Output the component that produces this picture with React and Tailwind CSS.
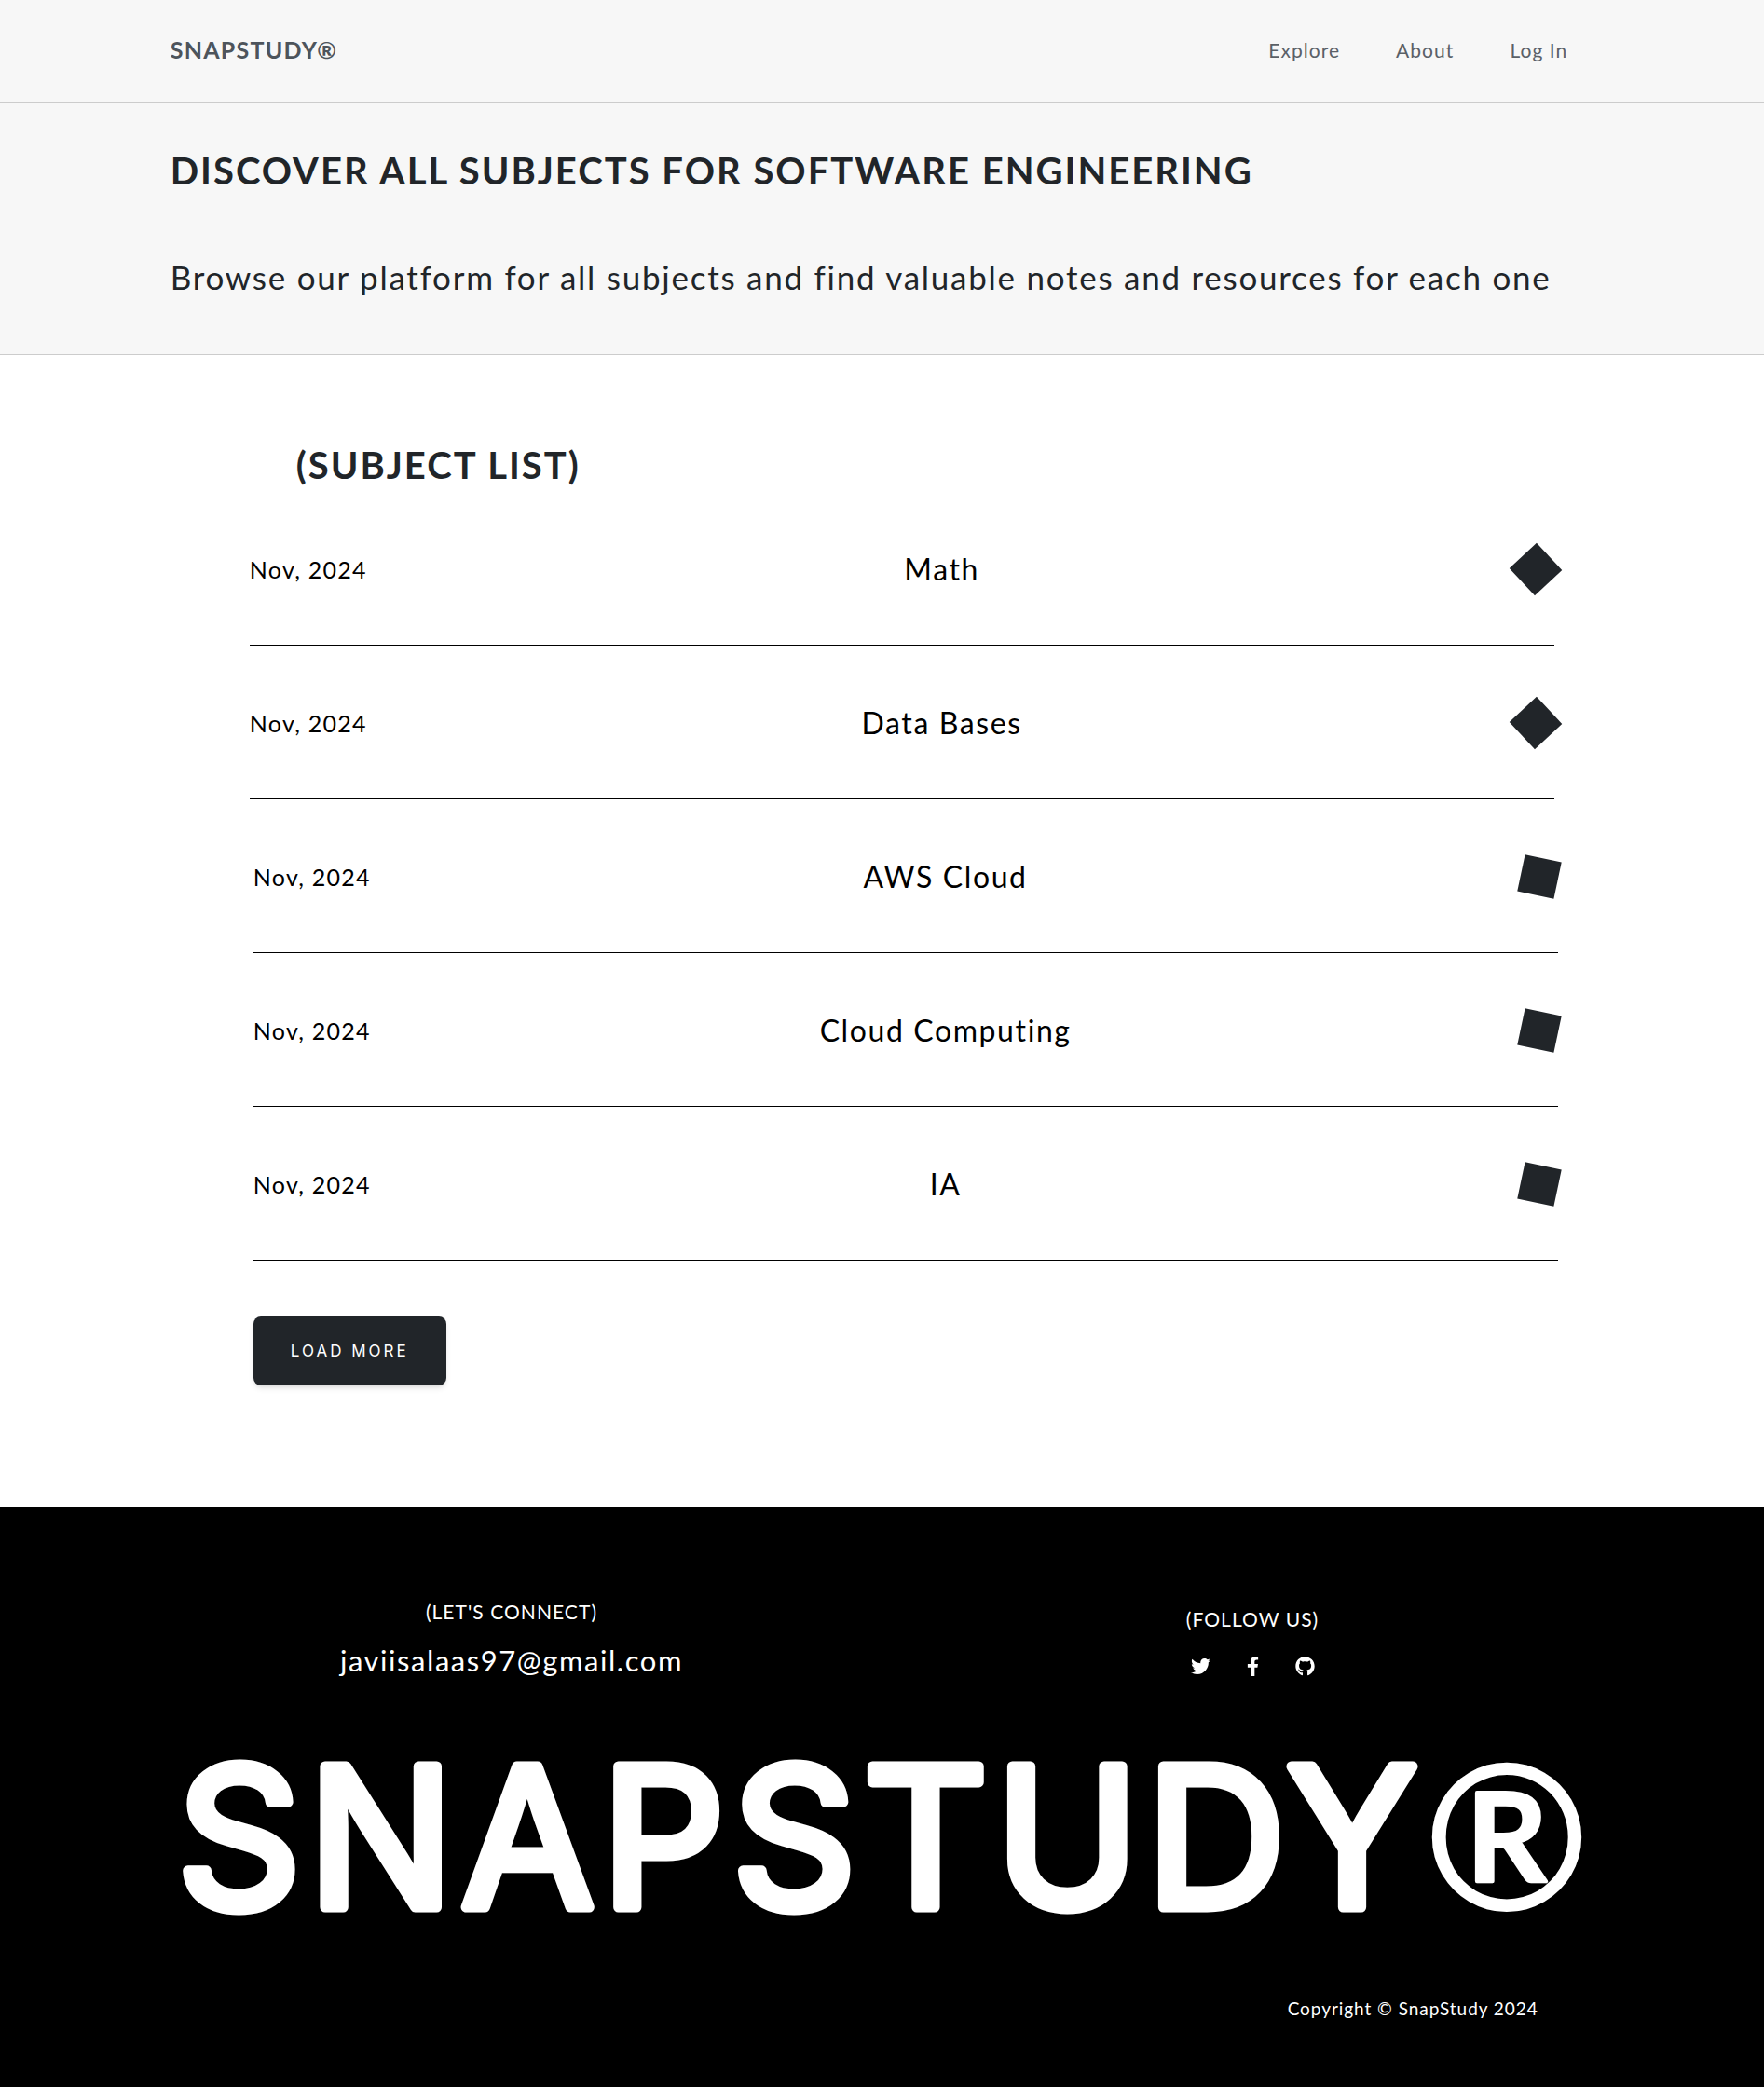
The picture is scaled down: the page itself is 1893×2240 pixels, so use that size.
import { FaTwitter, FaFacebookF, FaGithub } from "react-icons/fa";

const subjects = [
  { date: "Nov, 2024", title: "Math", row: "pr-1", mark: "rotate-47" },
  { date: "Nov, 2024", title: "Data Bases", row: "pr-1", mark: "rotate-47" },
  { date: "Nov, 2024", title: "AWS Cloud", row: "pl-1", mark: "rotate-12" },
  { date: "Nov, 2024", title: "Cloud Computing", row: "pl-1", mark: "rotate-12" },
  { date: "Nov, 2024", title: "IA", row: "pl-1", mark: "rotate-12" },
];

const social = [
  { label: "Twitter", Icon: FaTwitter },
  { label: "Facebook", Icon: FaFacebookF },
  { label: "GitHub", Icon: FaGithub },
];

function Header() {
  return (
    <header className="border-b border-[#cccccc] bg-[#f7f7f7] px-[9.65%]">
      <div className="flex h-[110px] items-center justify-between pr-7 pb-1">
        <a href="#home" className="text-[25px] leading-8 font-bold tracking-wider text-[#4d545b]">
          SNAPSTUDY®
        </a>
        <nav className="flex gap-15 pt-0.5 text-[21px] leading-7 tracking-wider text-[#5a6067]">
          <a href="#explore">Explore</a>
          <a href="#about">About</a>
          <a href="#login">Log In</a>
        </nav>
      </div>
    </header>
  );
}

function Hero() {
  return (
    <section className="border-b border-[#cccccc] bg-[#f7f7f7] px-[9.65%] pt-12 pb-[59px] text-[#212529]">
      <h1 className="text-[40px] leading-12 font-bold tracking-wider">
        DISCOVER ALL SUBJECTS FOR SOFTWARE ENGINEERING
      </h1>
      <p className="mt-[66px] text-[35px] leading-12 tracking-wider">
        Browse our platform for all subjects and find valuable notes and resources for each one
      </p>
    </section>
  );
}

function SubjectList() {
  return (
    <main className="mr-[11.7%] ml-[14.15%] pt-[94px] pb-[131px]">
      <h2 className="ml-12.5 text-[40px] leading-12 font-bold tracking-wider text-[#212529]">(SUBJECT LIST)</h2>
      <ul className="mt-[5px]">
        {subjects.map((s) => (
          <li key={s.title} className={s.row}>
            <a
              href="#subject"
              className="flex h-[165px] items-center justify-between border-b border-black pt-0.5 text-black"
            >
              <span className="text-[25px] leading-8 tracking-wider">{s.date}</span>
              <span className="text-[32px] leading-10 tracking-wider">{s.title}</span>
              <span className={"size-10 bg-[#212529] " + s.mark} />
            </a>
          </li>
        ))}
      </ul>
      <button
        type="button"
        className="mt-15 ml-1 h-[74px] rounded-lg bg-[#212529] px-10 font-[Inter,sans-serif] text-[17px] leading-6 tracking-[3px] text-white shadow-md"
      >
        LOAD MORE
      </button>
    </main>
  );
}

function Footer() {
  return (
    <footer className="bg-black pb-18 text-white">
      <div className="mx-[8%] grid grid-cols-2 justify-items-center pt-[98px]">
        <div className="text-center">
          <h3 className="text-[21px] leading-7 tracking-wider">(LET'S CONNECT)</h3>
          <a href="mailto:javiisalaas97@gmail.com" className="mt-[18px] block text-[31px] leading-10 tracking-wider">
            javiisalaas97@gmail.com
          </a>
        </div>
        <div className="pt-2 text-center">
          <h3 className="text-[21px] leading-7 tracking-wider">(FOLLOW US)</h3>
          <div className="mt-[26px] flex justify-center gap-[35px]">
            {social.map(({ label, Icon }) => (
              <a key={label} href="#social" aria-label={label}>
                <Icon size={21} />
              </a>
            ))}
          </div>
        </div>
      </div>
      <svg viewBox="0 -40 1893 300" className="mt-2 block w-full" role="img" aria-label="SNAPSTUDY®">
        <text
          x="190"
          y="197"
          fontFamily="Inter, sans-serif"
          fontWeight="400"
          fontSize="207"
          letterSpacing="8"
          fill="#fff"
          stroke="#fff"
          strokeWidth="11"
          strokeLinejoin="round"
        >
          SNAPSTUDY
          <tspan x="1528" y="199" fontFamily="Lato, sans-serif" fontSize="214" fontWeight="400" strokeWidth="4">®</tspan>
        </text>
      </svg>
      <p className="mt-[34px] mr-[12.8%] text-right text-[19px] leading-6 tracking-wider">Copyright © SnapStudy 2024</p>
    </footer>
  );
}

export default function App() {
  return (
    <div className="min-h-screen bg-white font-[Lato,sans-serif]">
      <Header />
      <Hero />
      <SubjectList />
      <Footer />
    </div>
  );
}
